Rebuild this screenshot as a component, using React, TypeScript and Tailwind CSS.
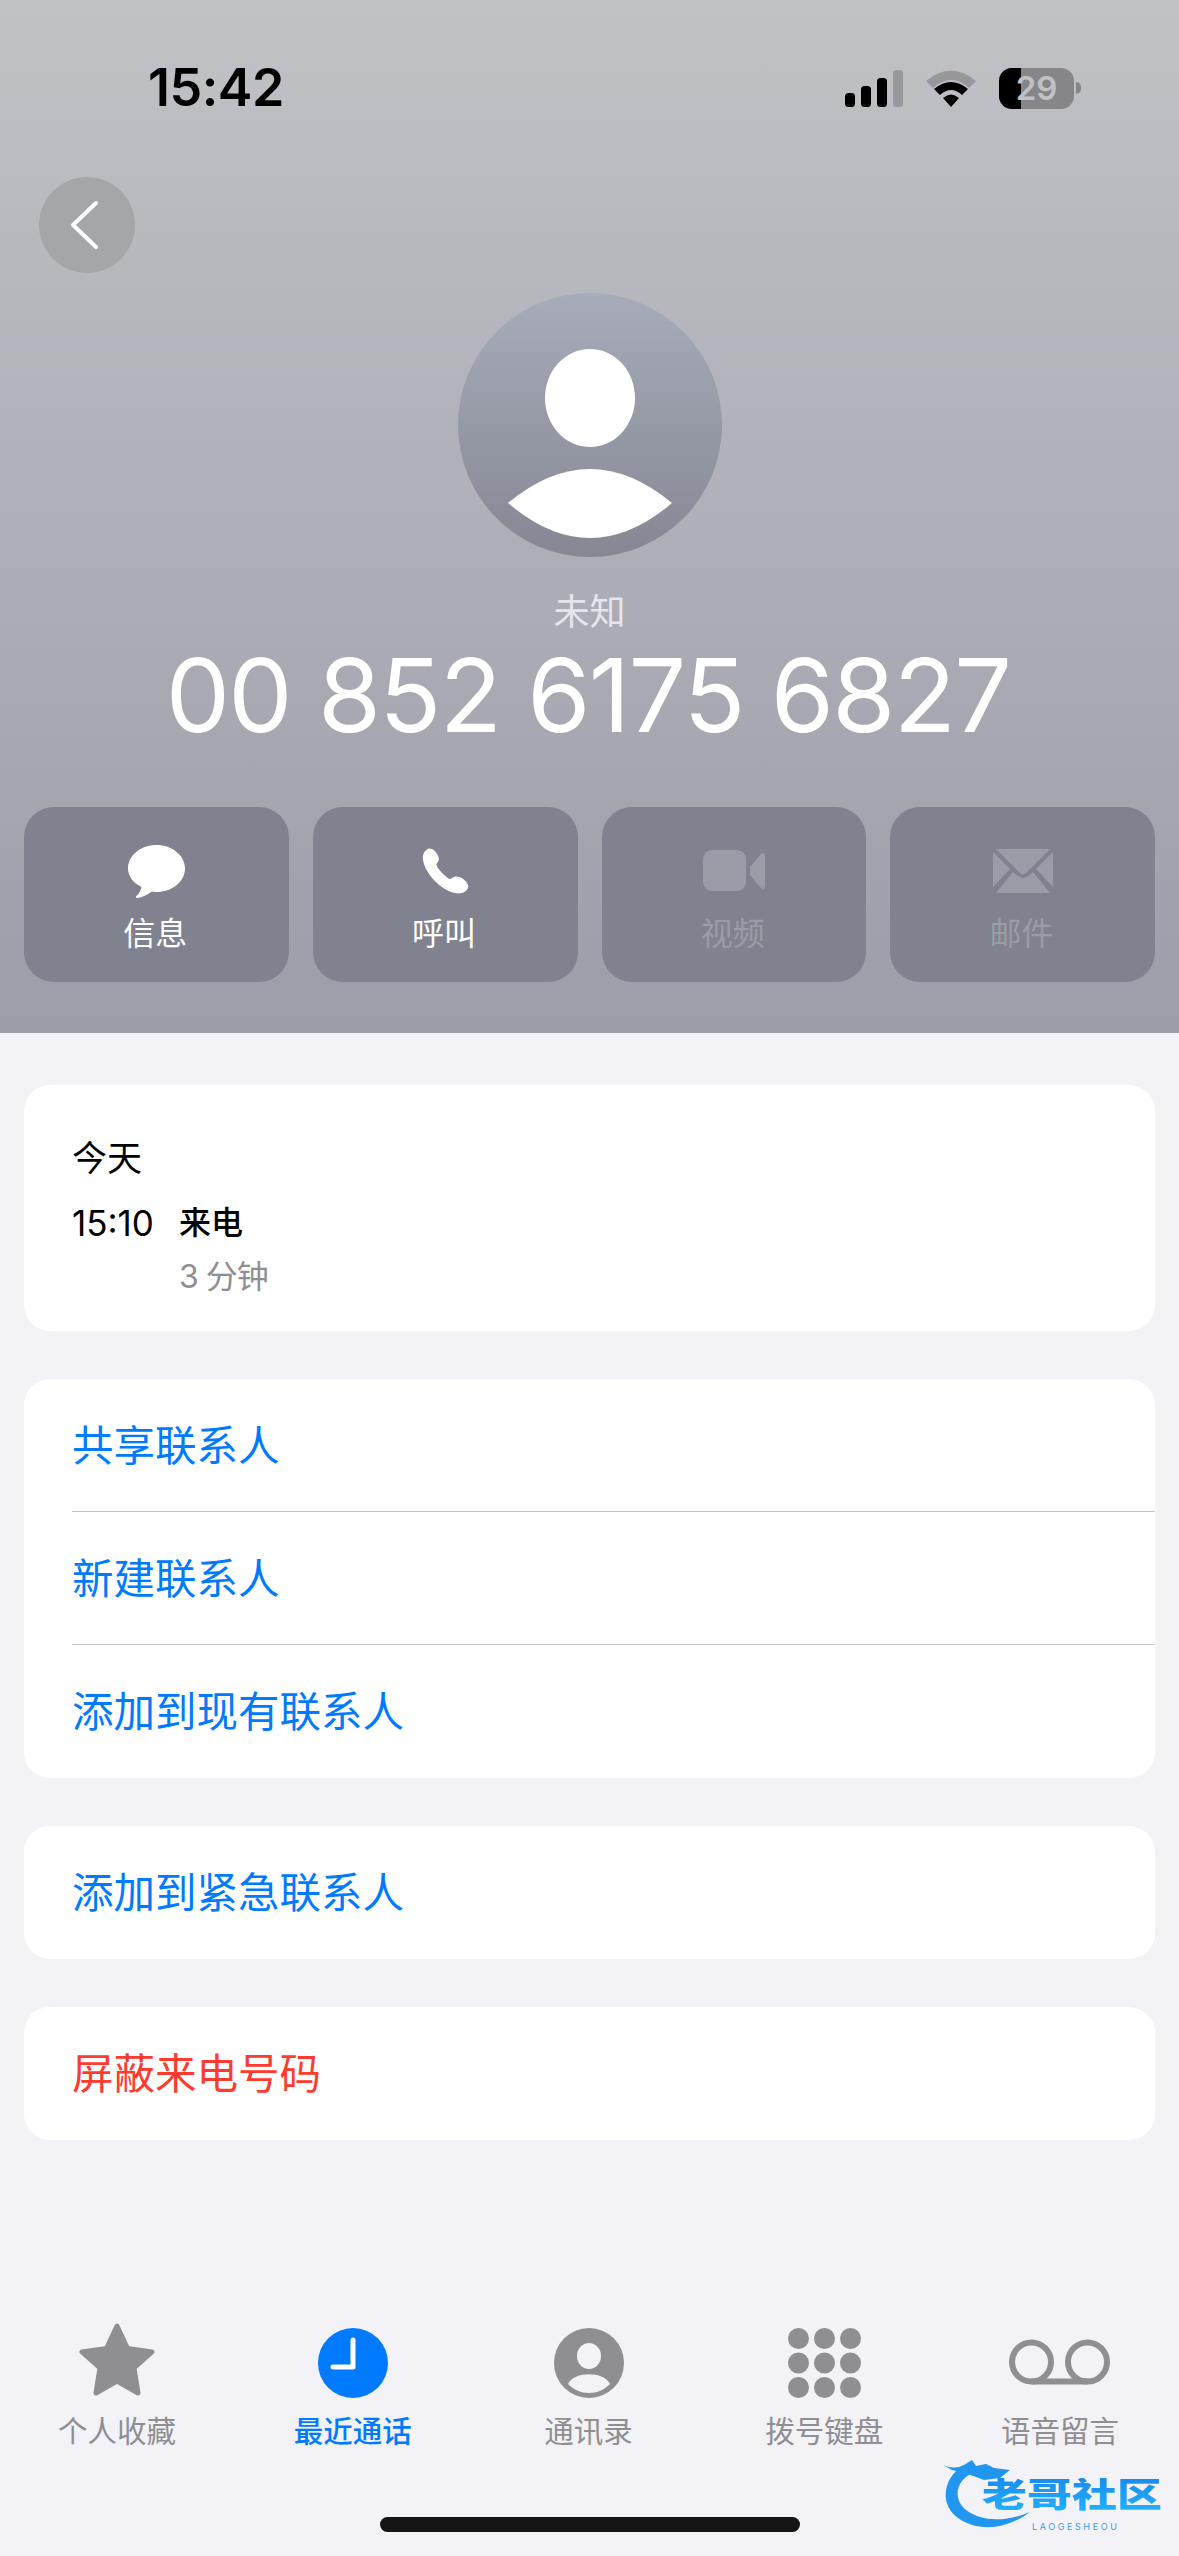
import React from 'react';

const FONT = 'font-["Inter","Noto_Sans_CJK_SC",sans-serif]';

const StatusIcons: React.FC = () => (
  <div className="flex items-center">
    {/* 신호 */}
    <svg width="58" height="37" viewBox="0 0 58 37">
      <rect x="0" y="23" width="10" height="14" rx="3.5" fill="#000" />
      <rect x="16" y="16" width="10" height="21" rx="3.5" fill="#000" />
      <rect x="32" y="8" width="10" height="29" rx="3.5" fill="#000" />
      <rect x="48" y="0" width="10" height="37" rx="3.5" fill="#000" fillOpacity="0.2" />
    </svg>
    {/* wifi */}
    <svg width="52" height="38" viewBox="0 0 52 38" className="ml-[22px]">
      <path d="M1 12 Q26 -9 51 12 L44 19 Q26 3 8 19 Z" fill="#000" fillOpacity="0.2" />
      <path d="M9 20 Q26 6 43 20 L37 26 Q26 16 15 26 Z" fill="#000" />
      <path d="M18 29 Q26 22 34 29 L26 38 Z" fill="#000" />
    </svg>
    {/* 배터리 */}
    <div className="relative ml-[22px] h-[41px] w-[75px] overflow-hidden rounded-[13px] bg-[#86868a]">
      <div className="h-full w-[22px] bg-black" />
      <span className="absolute inset-0 flex items-center justify-center text-[33px] leading-none font-semibold text-[#c0c1c5]">
        29
      </span>
    </div>
    <div className="ml-[2px] h-[12px] w-[5px] rounded-r-full bg-[#86868a]" />
  </div>
);

const ActionButton: React.FC<{ label: string; dim?: boolean; children: React.ReactNode }> = ({
  label,
  dim,
  children,
}) => (
  <div className="flex h-[175px] flex-col items-center rounded-[30px] bg-[#80828f]">
    <div className="mt-[37px] flex h-[54px] items-center justify-center">{children}</div>
    <div className={`mt-[13px] -translate-x-[1px] text-[32px] leading-[46px] ${dim ? 'text-[#9a9ca7]' : 'text-white'}`}>
      {label}
    </div>
  </div>
);

const Row: React.FC<{ label: string; color?: string; divider?: boolean }> = ({
  label,
  color = 'text-[#007aff]',
  divider,
}) => (
  <div className="pl-[48px]">
    <div
      className={`flex h-[133px] items-center pt-[2px] text-[41.5px] ${color} ${divider ? 'border-b border-[#c6c6c8]' : ''}`}
    >
      {label}
    </div>
  </div>
);

const Tab: React.FC<{ label: string; active?: boolean; children: React.ReactNode }> = ({
  label,
  active,
  children,
}) => (
  <div className="flex flex-col items-center">
    <div className="flex h-[75px] items-end">{children}</div>
    <div
      className={`mt-[13px] -translate-x-[1px] text-[29.5px] leading-[40px] ${active ? 'font-medium text-[#007aff]' : 'text-[#8e8e93]'}`}
    >
      {label}
    </div>
  </div>
);

const App: React.FC = () => {
  return (
    <div className={`relative flex h-[2556px] w-[1179px] flex-col overflow-hidden bg-[#f2f2f7] ${FONT}`}>
      {/* 상단 헤더 */}
      <div className="flex h-[1033px] flex-col bg-gradient-to-b from-[#c1c2c6] to-[#9c9da9]">
        <div className="flex h-[44px] mt-[66px] items-center justify-between pl-[148px] pr-[98px]">
          <span className="text-[52px] leading-none font-semibold tracking-[-0.5px] text-black">15:42</span>
          <StatusIcons />
        </div>

        <div className="mt-[67px] ml-[39px] flex h-[96px] w-[96px] items-center justify-center rounded-full bg-[#a5a6aa]">
          <svg width="30" height="50" viewBox="0 0 30 50" className="-translate-x-[3px]">
            <path d="M27 3 L4 25 L27 47" fill="none" stroke="#fff" strokeWidth="4" strokeLinecap="round" strokeLinejoin="round" />
          </svg>
        </div>

        <div className="mt-[20px] flex h-[264px] w-[264px] items-center justify-center self-center rounded-full bg-gradient-to-b from-[#a7acbb] to-[#858893]">
          <svg width="264" height="264" viewBox="0 0 264 264">
            <ellipse cx="132" cy="105" rx="45" ry="49" fill="#fff" />
            <path d="M50 210 Q132 142 214 210 Q132 280 50 210 Z" fill="#fff" />
          </svg>
        </div>

        <div className="mt-[30px] text-center text-[36px] leading-[50px] text-[#e6e6ea]">未知</div>
        <div className="pr-[3px] text-center text-[102px] leading-[116px] font-normal tracking-[-1.7px] text-white">
          00 852 6175 6827
        </div>

        <div className="mt-[54px] grid grid-cols-4 gap-[24px] px-[24px]">
          <ActionButton label="信息">
            <svg width="57" height="53" viewBox="0 0 57 53">
              <path
                d="M28.5 0 C44 0 57 10.5 57 23.5 C57 36.5 44 47 28.5 47 C26 47 25 47 24 46.6 C19 50 13 53 9 53 C7.5 53 7.5 52 8.5 51 C11 48.5 13 45 13.5 42 C5 38 0 31 0 23.5 C0 10.5 13 0 28.5 0 Z"
                fill="#fff"
              />
            </svg>
          </ActionButton>
          <ActionButton label="呼叫">
            <svg width="47" height="46" viewBox="0 0 140 138">
              <path
                d="M18 2 C30 0 42 10 48 24 C52 34 50 40 44 46 C42 50 44 56 50 64 C58 74 66 82 74 88 C80 94 86 94 90 90 C96 84 104 84 114 88 C128 94 140 108 138 118 C134 132 120 138 104 136 C70 132 30 100 10 60 C0 36 -4 14 18 2 Z"
                fill="#fff"
              />
            </svg>
          </ActionButton>
          <ActionButton label="视频" dim>
            <svg width="62" height="42" viewBox="0 0 62 42">
              <rect x="0" y="0" width="43" height="41" rx="9" fill="#9a9ca7" />
              <path d="M47 17 L58 4 Q62 1 62 6 L62 36 Q62 41 58 38 L47 25 Z" fill="#9a9ca7" />
            </svg>
          </ActionButton>
          <ActionButton label="邮件" dim>
            <svg width="60" height="44" viewBox="0 0 60 44">
              <path d="M3 0 H57 L33 24 Q30 27 27 24 Z" fill="#9a9ca7" />
              <path d="M0 3 L17 20 L0 38 Z" fill="#9a9ca7" />
              <path d="M60 3 L43 20 L60 38 Z" fill="#9a9ca7" />
              <path d="M3 44 L20 23 L25 27 Q30 31 35 27 L40 23 L57 44 Z" fill="#9a9ca7" />
            </svg>
          </ActionButton>
        </div>
      </div>

      {/* 본문 카드 */}
      <div className="mt-[52px] flex flex-col gap-[48px] px-[24px]">
        <div className="h-[246px] rounded-[26px] bg-white pt-[48px] pl-[48px]">
          <div className="text-[35px] leading-[50px] text-black">今天</div>
          <div className="mt-[15px] flex items-center">
            <span className="w-[107px] text-[35px] leading-[50px] text-black">15:10</span>
            <span className="text-[32px] leading-[50px] font-medium text-black">来电</span>
          </div>
          <div className="mt-[4px] pl-[107px] text-[32px] leading-[50px] tracking-[-1px] text-[#8e8e93]">3 分钟</div>
        </div>

        <div className="rounded-[26px] bg-white">
          <Row label="共享联系人" divider />
          <Row label="新建联系人" divider />
          <Row label="添加到现有联系人" />
        </div>

        <div className="rounded-[26px] bg-white">
          <Row label="添加到紧急联系人" />
        </div>

        <div className="rounded-[26px] bg-white">
          <Row label="屏蔽来电号码" color="text-[#ff3b30]" />
        </div>
      </div>

      {/* 하단 탭바 */}
      <div className="mt-auto">
        <div className="grid grid-cols-5">
          <Tab label="个人收藏">
            <svg width="78" height="75" viewBox="0 0 78 75" className="-translate-x-[1px]">
              <path
                d="M39 3 L49.5 25.5 L74 29 L56 45 L60 70 L39 58 L18 70 L22 45 L4 29 L28.5 25.5 Z"
                fill="#8e8e93"
                stroke="#8e8e93"
                strokeWidth="5"
                strokeLinejoin="round"
              />
            </svg>
          </Tab>
          <Tab label="最近通话" active>
            <svg width="70" height="70" viewBox="0 0 70 70" className="-translate-x-[1px]">
              <circle cx="35" cy="35" r="35" fill="#007aff" />
              <path d="M35 12 V39 H15" fill="none" stroke="#fff" strokeWidth="5" strokeLinecap="round" strokeLinejoin="round" />
            </svg>
          </Tab>
          <Tab label="通讯录">
            <svg width="70" height="70" viewBox="0 0 70 70">
              <circle cx="35" cy="35" r="35" fill="#8e8e93" />
              <ellipse cx="35" cy="28" rx="12" ry="13" fill="#f2f2f7" />
              <path d="M14 56 C20 43 50 43 56 56 C50 62 43 65 35 65 C27 65 20 62 14 56 Z" fill="#f2f2f7" />
            </svg>
          </Tab>
          <Tab label="拨号键盘">
            <svg width="73" height="70" viewBox="0 0 73 70" className="-translate-x-[1px]">
              {[10.5, 36.5, 62.5].flatMap(x =>
                [10.5, 35, 59.5].map(y => <circle key={`${x}-${y}`} cx={x} cy={y} r="10.5" fill="#8e8e93" />)
              )}
            </svg>
          </Tab>
          <Tab label="语音留言">
            <svg width="101" height="46" viewBox="0 0 101 46" className="mb-[13px] -translate-x-[2px]">
              <circle cx="22.5" cy="23" r="19.5" fill="none" stroke="#8e8e93" strokeWidth="6" />
              <circle cx="78.5" cy="23" r="19.5" fill="none" stroke="#8e8e93" strokeWidth="6" />
              <path d="M22.5 42.5 H78.5" stroke="#8e8e93" strokeWidth="6" />
            </svg>
          </Tab>
        </div>

        <div className="mt-[66px] mb-[24px] h-[15px] w-[420px] mx-auto rounded-full bg-[#151515]" />
      </div>

      {/* 워터마크 */}
      <div className="absolute top-[2452px] left-[938px] h-[90px] w-[230px]">
        <svg width="100" height="90" viewBox="0 0 100 90" className="absolute top-0 left-0">
          <path
            d="M26 13 C6 24 0 52 20 66 C40 80 68 78 92 60 C68 70 44 70 28 58 C14 46 18 28 36 20 Z"
            fill="#2196f0"
          />
          <path d="M5 13 Q16 18 26 13 L34 8 L38 14 L48 12 L56 16 L72 18 L62 26 L46 28 L30 22 L14 18 Z" fill="#2196f0" />
        </svg>
        <div className="absolute top-[26px] left-[44px] origin-top scale-y-[0.75] whitespace-nowrap bg-gradient-to-b from-[#1b8cf0] to-[#22b0ff] bg-clip-text text-[45px] leading-[44px] font-black text-transparent">
          老哥社区
        </div>
        <div className="absolute top-[70px] left-[94px] text-[9px] leading-[10px] tracking-[2.6px] whitespace-nowrap text-[#3a9cec]">
          LAOGESHEOU
        </div>
      </div>
    </div>
  );
};

export default App;
